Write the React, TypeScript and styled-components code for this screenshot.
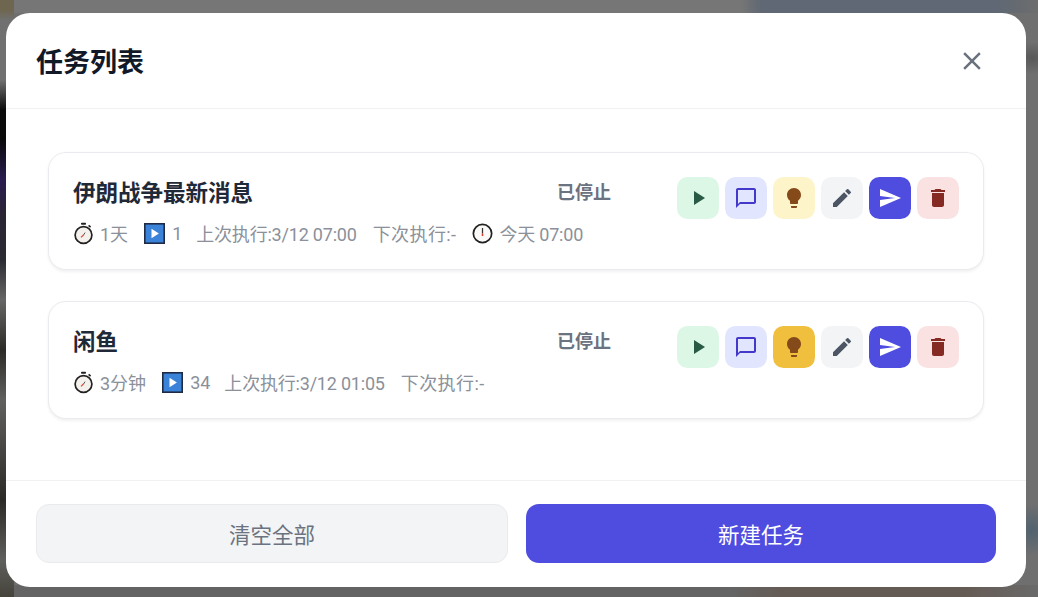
import styled, { createGlobalStyle } from "styled-components";
import {
  MdChatBubbleOutline,
  MdClose,
  MdDelete,
  MdEdit,
  MdLightbulb,
  MdPlayArrow,
  MdSend,
} from "react-icons/md";

const GlobalStyle = createGlobalStyle`
  html, body {
    margin: 0;
    padding: 0;
    height: 100%;
    overflow: hidden;
  }
  body {
    font-family: Roboto, "Noto Sans CJK SC", "Liberation Sans", sans-serif;
  }
`;

type Tone = "play" | "chat" | "idea" | "ideaOn" | "edit" | "send" | "remove";

const tones: Record<Tone, { bg: string; fg: string }> = {
  play: { bg: "#dcf7e6", fg: "#285a45" },
  chat: { bg: "#e1e6fe", fg: "#4338ca" },
  idea: { bg: "#fdf4ca", fg: "#854a1a" },
  ideaOn: { bg: "#f0bf3e", fg: "#854a1a" },
  edit: { bg: "#f3f4f6", fg: "#4b5563" },
  send: { bg: "#4f4ddf", fg: "#ffffff" },
  remove: { bg: "#fae2e2", fg: "#852a22" },
};

const StopwatchIcon = () => (
  <svg width="21" height="23" viewBox="0 0 21 23">
    <rect x="8" y="0.8" width="5" height="2" rx="0.8" fill="#222" />
    <path d="M15.6 3.4l2 1.8" stroke="#222" strokeWidth="1.6" />
    <circle cx="10.5" cy="13" r="8.4" fill="#f4f1ec" stroke="#222" strokeWidth="1.7" />
    <path d="M10.5 13L8 15.4" stroke="#d9483b" strokeWidth="1.2" />
    <path d="M10.5 13l1.6-2.4" stroke="#555" strokeWidth="1" />
  </svg>
);

const PlayBoxIcon = () => (
  <svg width="21" height="21" viewBox="0 0 21 21">
    <rect x="0.8" y="0.8" width="19.4" height="19.4" fill="#3b82d9" stroke="#1f2a44" strokeWidth="1.6" />
    <path d="M7.5 5.8l7.4 4.7-7.4 4.7z" fill="#ffffff" />
  </svg>
);

const ClockIcon = () => (
  <svg width="21" height="21" viewBox="0 0 22 22">
    <circle cx="11" cy="11" r="9.6" fill="#fbfaf8" stroke="#222" strokeWidth="1.8" />
    <path d="M11 11V5.2" stroke="#333" strokeWidth="1.3" />
    <path d="M11 11v2.6" stroke="#d9382b" strokeWidth="1.6" />
  </svg>
);

const tasks = [
  {
    name: "伊朗战争最新消息",
    interval: "1天",
    runs: "1",
    last: "上次执行:3/12 07:00",
    next: "下次执行:-",
    at: "今天 07:00",
    ideaTone: "idea" as Tone,
  },
  {
    name: "闲鱼",
    interval: "3分钟",
    runs: "34",
    last: "上次执行:3/12 01:05",
    next: "下次执行:-",
    at: "",
    ideaTone: "ideaOn" as Tone,
  },
];

const App = () => {
  return (
    <Page>
      <GlobalStyle />
      <Modal>
        <Header>
          <Title>任务列表</Title>
          <CloseButton aria-label="关闭">
            <MdClose />
          </CloseButton>
        </Header>
        <Body>
          {tasks.map((task) => (
            <Card key={task.name}>
              <Info>
                <TopRow>
                  <TaskName>{task.name}</TaskName>
                  <Status>已停止</Status>
                </TopRow>
                <Meta>
                  <MetaItem>
                    <StopwatchIcon />
                    {task.interval}
                  </MetaItem>
                  <MetaItem>
                    <PlayBoxIcon />
                    <RunCount>{task.runs}</RunCount>
                  </MetaItem>
                  <TimeItem>{task.last}</TimeItem>
                  <NextItem>{task.next}</NextItem>
                  {task.at && (
                    <TimeItem>
                      <ClockIcon />
                      {task.at}
                    </TimeItem>
                  )}
                </Meta>
              </Info>
              <Actions>
                <ActionButton $tone="play">
                  <MdPlayArrow />
                </ActionButton>
                <ActionButton $tone="chat">
                  <MdChatBubbleOutline />
                </ActionButton>
                <ActionButton $tone={task.ideaTone}>
                  <MdLightbulb />
                </ActionButton>
                <ActionButton $tone="edit">
                  <MdEdit />
                </ActionButton>
                <ActionButton $tone="send">
                  <MdSend />
                </ActionButton>
                <ActionButton $tone="remove">
                  <MdDelete />
                </ActionButton>
              </Actions>
            </Card>
          ))}
        </Body>
        <Footer>
          <ClearButton>清空全部</ClearButton>
          <CreateButton>新建任务</CreateButton>
        </Footer>
      </Modal>
    </Page>
  );
};

const Page = styled.div`
  box-sizing: border-box;
  position: relative;
  width: 1038px;
  height: 597px;
  padding: 13px 12px 10px 6px;
  background: linear-gradient(
    180deg,
    #6f6650 0,
    #6f6650 10px,
    #707070 20px,
    #707070 80px,
    #0a0a0a 110px,
    #0a0a0a 140px,
    #2a1c50 180px,
    #2a2433 215px,
    #2b2b33 260px,
    #666666 300px,
    #2c2b27 350px,
    #60605f 400px,
    #2c2a26 500px,
    #5f5f5d 560px,
    #45433a 597px
  );

  &::before {
    content: "";
    position: absolute;
    inset: 0 0 0 14px;
    background:
      linear-gradient(90deg, #767676 0, #767676 71%, #5f6874 73%, #5f6874 96%, #6d6d6d 100%) top / 100% 13px no-repeat,
      linear-gradient(90deg, #646464 0, #646464 70%, #655b55 75%, #655b55 93%, #6a6a6a 100%) bottom / 100% 12px no-repeat,
      radial-gradient(ellipse 24px 26px at 1018px 530px, #51626f, transparent),
      radial-gradient(ellipse 24px 16px at 1018px 58px, #585858, transparent),
      #6f6f6f;
  }
`;

const Modal = styled.div`
  position: relative;
  display: flex;
  flex-direction: column;
  height: 574px;
  background: #ffffff;
  border-radius: 24px;
  overflow: hidden;
`;

const Header = styled.header`
  box-sizing: border-box;
  flex: none;
  height: 96px;
  padding: 0 30px;
  display: flex;
  align-items: center;
  justify-content: space-between;
  border-bottom: 1.5px solid #f0f1f3;
`;

const Title = styled.h2`
  margin: 4px 0 0;
  font-size: 27px;
  font-weight: 700;
  line-height: 40px;
  color: #111827;
`;

const CloseButton = styled.button`
  width: 42px;
  height: 42px;
  margin-right: 3px;
  padding: 0;
  border: none;
  background: none;
  color: #6b7280;
  font-size: 30px;
  display: flex;
  align-items: center;
  justify-content: center;
`;

const Body = styled.div`
  flex: 1;
  padding: 43px 42px 0;
  display: flex;
  flex-direction: column;
  gap: 31px;
`;

const Card = styled.section`
  box-sizing: border-box;
  height: 118px;
  padding: 23.5px 24px 24px;
  display: flex;
  align-items: flex-start;
  background: #ffffff;
  border: 1.5px solid #eaebee;
  border-radius: 18px;
  box-shadow: 0 1.5px 3px rgba(0, 0, 0, 0.06);
`;

const Info = styled.div`
  flex: 1;
  min-width: 0;
  margin-right: 66px;
`;

const TopRow = styled.div`
  display: flex;
  align-items: center;
  justify-content: space-between;
  height: 32px;
`;

const TaskName = styled.h3`
  margin: 0;
  font-size: 22.5px;
  font-weight: 700;
  line-height: 32px;
  color: #1f2937;
`;

const Status = styled.span`
  font-size: 18px;
  font-weight: 700;
  margin-bottom: 3px;
  color: #6b7280;
`;

const Meta = styled.div`
  display: flex;
  align-items: center;
  gap: 16px;
  margin-top: 10.5px;
  height: 28px;
  white-space: nowrap;
  font-size: 18px;
  color: #8b909a;
`;

const MetaItem = styled.span`
  display: inline-flex;
  align-items: center;
  gap: 6px;
`;

const TimeItem = styled(MetaItem)`
  letter-spacing: -0.2px;
`;

const NextItem = styled(MetaItem)`
  letter-spacing: 0.4px;
`;

const RunCount = styled.span`
  margin: 0 -2px 0 1px;
`;

const Actions = styled.div`
  flex: none;
  display: flex;
  gap: 6px;
`;

const ActionButton = styled.button<{ $tone: Tone }>`
  width: 42px;
  height: 42px;
  padding: 0;
  border: none;
  border-radius: 10.5px;
  font-size: 24px;
  display: flex;
  align-items: center;
  justify-content: center;
  background: ${({ $tone }) => tones[$tone].bg};
  color: ${({ $tone }) => tones[$tone].fg};
`;

const Footer = styled.footer`
  box-sizing: border-box;
  flex: none;
  height: 107.5px;
  padding: 23px 30px;
  display: flex;
  gap: 18px;
  border-top: 1.5px solid #f0f1f3;
`;

const FooterButton = styled.button`
  flex: 1;
  height: 59px;
  border-radius: 13px;
  font-family: inherit;
  font-size: 21.5px;
`;

const ClearButton = styled(FooterButton)`
  background: #f3f4f6;
  border: 1.5px solid #e8eaed;
  color: #6b7280;
`;

const CreateButton = styled(FooterButton)`
  background: #4f4ddf;
  border: none;
  color: #ffffff;
`;

export default App;
